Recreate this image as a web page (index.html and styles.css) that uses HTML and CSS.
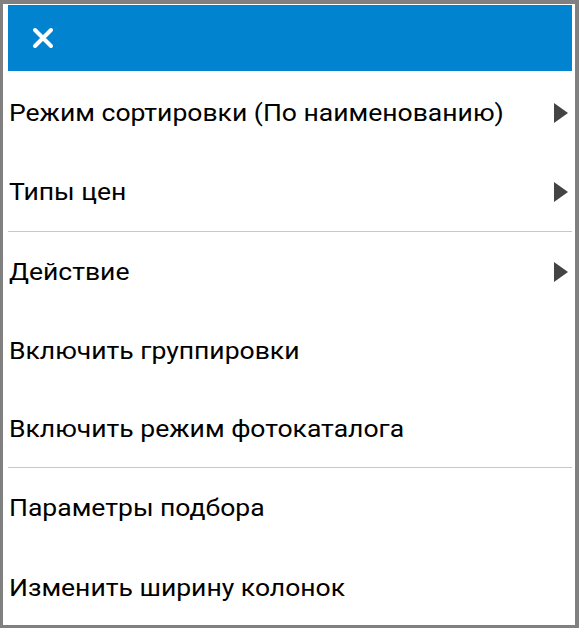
FILE: index.html
```html
<!DOCTYPE html>
<html lang="ru">
<head>
<meta charset="utf-8">
<link rel="stylesheet" href="styles.css">
</head>
<body>
<div class="frame">
  <div class="header">
    <svg class="close" width="22" height="22" viewBox="0 0 22 22">
      <path d="M3 3 L19 19 M19 3 L3 19" stroke="#fff" stroke-width="4" stroke-linecap="round" fill="none"/>
    </svg>
  </div>
  <ul class="menu">
    <li class="item"><span class="label">Режим сортировки (По наименованию)</span><span class="arrow"></span></li>
    <li class="item"><span class="label">Типы цен</span><span class="arrow"></span></li>
    <li class="divider"></li>
    <li class="item"><span class="label">Действие</span><span class="arrow"></span></li>
    <li class="item"><span class="label">Включить группировки</span></li>
    <li class="item item-short"><span class="label">Включить режим фотокаталога</span></li>
    <li class="divider"></li>
    <li class="item item-tall"><span class="label">Параметры подбора</span></li>
    <li class="item item-tall"><span class="label">Изменить ширину колонок</span></li>
  </ul>
</div>
</body>
</html>
```

FILE: styles.css
```css
html, body {
  margin: 0;
  padding: 0;
  background: #808080;
  height: 100%;
}
body {
  padding: 4px 4px 3px 3px;
  box-sizing: border-box;
}
.frame {
  background: #fff;
  height: 100%;
  box-sizing: border-box;
  padding: 1px 3px 0 5px;
  overflow: hidden;
  font-family: Roboto, "Noto Sans", sans-serif;
  color: #000;
}
.header {
  height: 66px;
  background: #0283cf;
  display: flex;
  align-items: center;
  padding-left: 24px;
}
.close {
  display: block;
}
.menu {
  list-style: none;
  margin: 0;
  padding: 2px 0 0 0;
}
.item {
  height: 79px;
  display: flex;
  align-items: center;
  justify-content: space-between;
  font-size: 24px;
  padding-left: 1px;
  padding-right: 4px;
}
.item-short {
  height: 77px;
}
.item-tall {
  height: 80px;
}
.label {
  display: inline-block;
  transform: scaleX(1.105);
  transform-origin: left center;
}
.arrow {
  width: 0;
  height: 0;
  border-top: 10px solid transparent;
  border-bottom: 10px solid transparent;
  border-left: 14px solid #444;
}
.divider {
  height: 1px;
  background: #c8c8c8;
}
```
